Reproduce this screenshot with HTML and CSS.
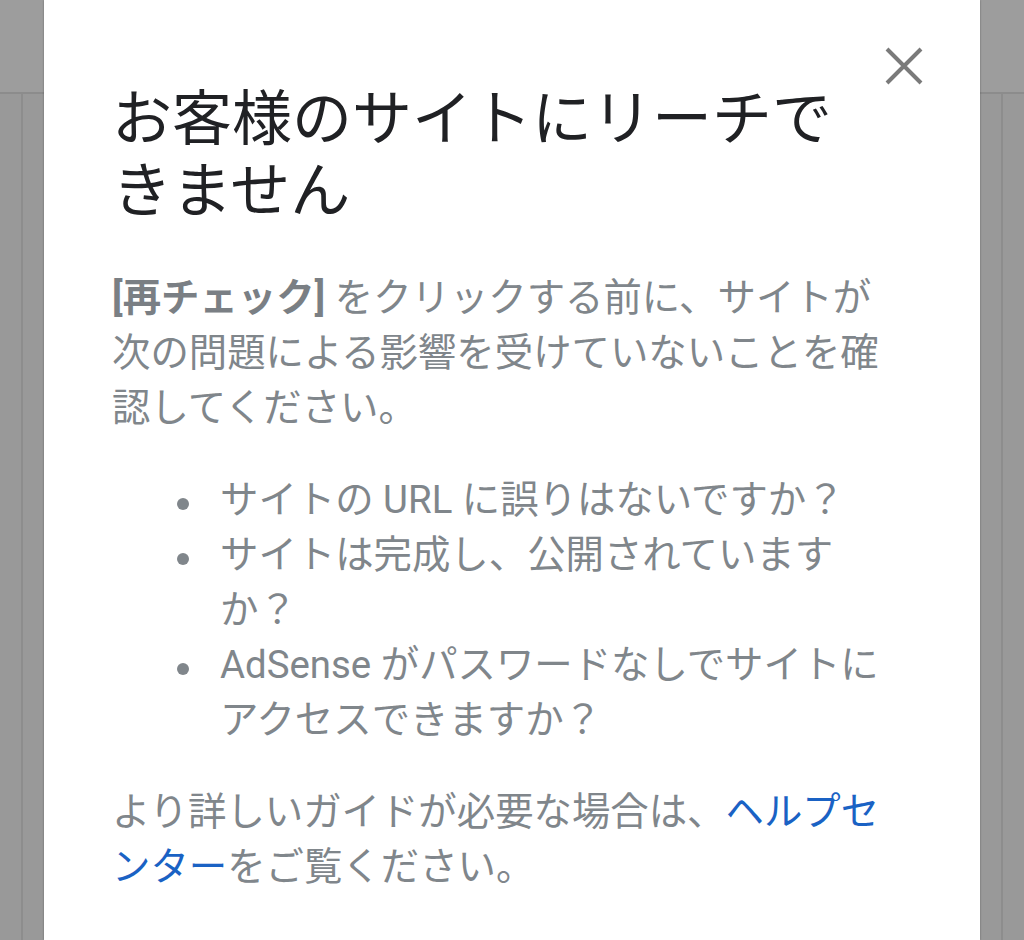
FILE: index.html
```html
<!DOCTYPE html>
<html lang="ja">
<head>
    <meta charset="UTF-8">
    <meta name="viewport" content="width=device-width, initial-scale=1.0">
    <title>サイトにリーチできません</title>
    <link rel="stylesheet" href="styles.css">
</head>
<body>
    <!-- dimmed page behind the dialog -->
    <div class="backdrop">
        <div class="backdrop-top"></div>
        <div class="backdrop-cols">
            <div class="col col-left"></div>
            <div class="col col-mid"></div>
            <div class="col col-right"></div>
        </div>
    </div>

    <div class="dialog" role="dialog">
        <button class="close-btn" aria-label="閉じる">
            <svg viewBox="0 0 38 38" width="38" height="38">
                <path d="M2 2 L36 36 M36 2 L2 36" stroke="#7a7a7a" stroke-width="4" fill="none"/>
            </svg>
        </button>

        <h1 class="dialog-title">お客様のサイトにリーチできません</h1>

        <p class="dialog-text"><b>[再チェック]</b> をクリックする前に、サイトが次の問題による影響を受けていないことを確認してください。</p>

        <ul class="check-list">
            <li>サイトの URL に誤りはないですか？</li>
            <li>サイトは完成し、公開されていますか？</li>
            <li>AdSense がパスワードなしでサイトにアクセスできますか？</li>
        </ul>

        <p class="dialog-text">より詳しいガイドが必要な場合は、<a href="#" class="help-link">ヘルプセンター</a>をご覧ください。</p>
    </div>
</body>
</html>
```

FILE: styles.css
```css
html, body {
    margin: 0;
    height: 100%;
}

body {
    background: #9a9a9a;
    font-family: Roboto, "Noto Sans CJK JP", sans-serif;
    overflow: hidden;
}

/* page behind */
.backdrop {
    height: 940px;
    display: flex;
    flex-direction: column;
}
.backdrop-top {
    height: 92px;
    background: #9d9d9d;
    border-bottom: 2px solid #8c8c8c;
}
.backdrop-cols {
    flex: 1;
    display: flex;
}
.col {
    background: #999;
}
.col-left {
    width: 21px;
    border-right: 2px solid #8d8d8d;
}
.col-mid {
    flex: 1;
}
.col-right {
    width: 21px;
    border-left: 2px solid #8d8d8d;
}

/* dialog */
.dialog {
    position: absolute;
    top: 0;
    left: 44px;
    width: 936px;
    height: 940px;
    box-sizing: border-box;
    padding: 84px 80px 0 68px;
    background: #fff;
    box-shadow: 0 0 2px rgba(0, 0, 0, 0.35);
}

.close-btn {
    position: absolute;
    top: 47px;
    right: 57px;
    width: 38px;
    height: 38px;
    padding: 0;
    border: none;
    background: none;
    display: block;
    cursor: pointer;
}
.close-btn svg {
    display: block;
}

.dialog-title {
    margin: 0;
    padding-right: 40px;
    font-size: 60px;
    line-height: 72px;
    font-weight: 400;
    color: #202124;
}

.dialog-text {
    margin: 42px 0 0;
    font-size: 38.4px;
    line-height: 55px;
    color: #80868b;
}
.dialog-text b {
    font-weight: 700;
    color: #7a7f84;
}

.help-link {
    color: #1a62c4;
    text-decoration: none;
}

.check-list {
    list-style: none;
    margin: 37px 0;
    padding: 0;
    font-size: 38.4px;
    line-height: 55px;
    color: #80868b;
}
.check-list li {
    display: flex;
}
.check-list li::before {
    content: "";
    flex: none;
    width: 12px;
    height: 12px;
    margin: 26px 31px 0 65px;
    border-radius: 50%;
    background: #80868b;
}
.check-list + .dialog-text {
    margin-top: 0;
}
```
